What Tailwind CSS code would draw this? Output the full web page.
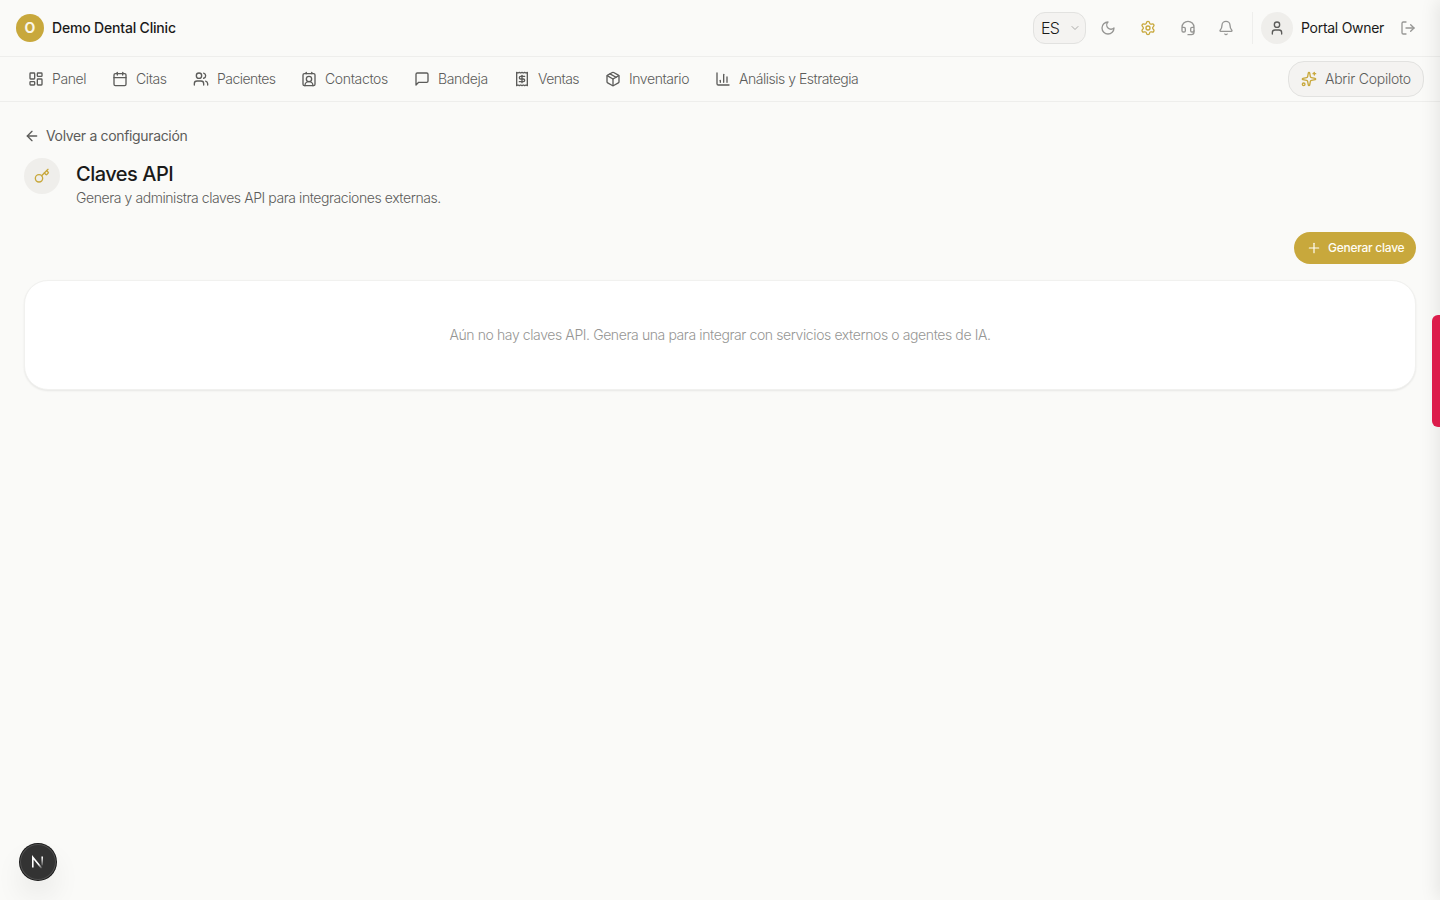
<!DOCTYPE html>
<html lang="es">
  <head>
    <meta charset="UTF-8" />
    <title>Claves API</title>
    <script src="https://cdn.jsdelivr.net/npm/@tailwindcss/browser@4"></script>
  </head>
  <body class="h-screen overflow-hidden bg-[#fafaf8] font-['Inter',sans-serif] text-[#1a1a1a]">
    <!-- Top bar -->
    <header class="flex h-[57px] items-center justify-between border-b border-[#eeeeec] pr-6 pl-4">
      <div class="flex items-center gap-2">
        <div class="flex size-7 items-center justify-center rounded-full bg-[#c8a83c] text-sm font-bold text-[#faf6e8]">O</div>
        <span class="w-32 whitespace-nowrap text-sm font-medium tracking-[-0.18px]">Demo Dental Clinic</span>
      </div>

      <div class="flex items-center">
        <button class="flex h-8 w-[53px] items-center justify-between rounded-xl border border-[#e2e2e0] bg-[#f4f3f1] pr-1 pl-[7px]">
          <span class="text-base font-light tracking-[-0.8px]">ES</span>
          <svg class="size-3 text-[#aaaaa8]" viewBox="0 0 24 24" fill="none" stroke="currentColor" stroke-width="2" stroke-linecap="round" stroke-linejoin="round"><path d="m6 9 6 6 6-6" /></svg>
        </button>
        <svg class="ml-3.5 size-4 text-[#969694]" viewBox="0 0 24 24" fill="none" stroke="currentColor" stroke-width="2" stroke-linecap="round" stroke-linejoin="round"><path d="M12 3a6 6 0 0 0 9 9 9 9 0 1 1-9-9Z" /></svg>
        <svg class="ml-6 size-4 text-[#c8a83c]" viewBox="0 0 24 24" fill="none" stroke="currentColor" stroke-width="2" stroke-linecap="round" stroke-linejoin="round"><path d="M9.671 4.136a2.34 2.34 0 0 1 4.659 0 2.34 2.34 0 0 0 3.319 1.915 2.34 2.34 0 0 1 2.33 4.033 2.34 2.34 0 0 0 0 3.831 2.34 2.34 0 0 1-2.33 4.033 2.34 2.34 0 0 0-3.319 1.915 2.34 2.34 0 0 1-4.659 0 2.34 2.34 0 0 0-3.32-1.915 2.34 2.34 0 0 1-2.33-4.033 2.34 2.34 0 0 0 0-3.831A2.34 2.34 0 0 1 6.35 6.051a2.34 2.34 0 0 0 3.319-1.915" /><circle cx="12" cy="12" r="3" /></svg>
        <svg class="ml-6 size-4 text-[#969694]" viewBox="0 0 24 24" fill="none" stroke="currentColor" stroke-width="2" stroke-linecap="round" stroke-linejoin="round"><path d="M3 11h3a2 2 0 0 1 2 2v3a2 2 0 0 1-2 2H5a2 2 0 0 1-2-2v-5Zm0 0a9 9 0 1 1 18 0m0 0v5a2 2 0 0 1-2 2h-1a2 2 0 0 1-2-2v-3a2 2 0 0 1 2-2h3Z" /><path d="M21 16v2a4 4 0 0 1-4 4h-5" /></svg>
        <svg class="ml-[22px] size-4 text-[#969694]" viewBox="0 0 24 24" fill="none" stroke="currentColor" stroke-width="2" stroke-linecap="round" stroke-linejoin="round"><path d="M10.268 21a2 2 0 0 0 3.464 0" /><path d="M3.262 15.326A1 1 0 0 0 4 17h16a1 1 0 0 0 .74-1.673C19.41 13.956 18 12.499 18 8A6 6 0 0 0 6 8c0 4.499-1.411 5.956-2.738 7.326" /></svg>
        <div class="ml-[18px] h-8 w-px bg-[#eeeeec]"></div>
        <div class="ml-2 flex size-8 items-center justify-center rounded-full bg-[#efeeeb]">
          <svg class="size-4 text-[#5c5c5a]" viewBox="0 0 24 24" fill="none" stroke="currentColor" stroke-width="2" stroke-linecap="round" stroke-linejoin="round"><path d="M19 21v-2a4 4 0 0 0-4-4H9a4 4 0 0 0-4 4v2" /><circle cx="12" cy="7" r="4" /></svg>
        </div>
        <span class="ml-2 w-[84px] whitespace-nowrap text-sm tracking-[-0.28px]">Portal Owner</span>
        <svg class="ml-[15px] size-4 text-[#969694]" viewBox="0 0 24 24" fill="none" stroke="currentColor" stroke-width="2" stroke-linecap="round" stroke-linejoin="round"><path d="M9 21H5a2 2 0 0 1-2-2V5a2 2 0 0 1 2-2h4" /><path d="m16 17 5-5-5-5" /><path d="M21 12H9" /></svg>
      </div>
    </header>

    <!-- Main navigation -->
    <nav class="flex h-[45px] items-center justify-between border-b border-[#eeeeec] px-4 text-sm font-light text-[#5c5c5a]">
      <div class="flex items-center gap-0.5 whitespace-nowrap">
        <a class="flex items-center gap-2 px-3">
          <svg class="size-4" viewBox="0 0 24 24" fill="none" stroke="currentColor" stroke-width="2" stroke-linecap="round" stroke-linejoin="round"><rect width="7" height="9" x="3" y="3" rx="1" /><rect width="7" height="5" x="14" y="3" rx="1" /><rect width="7" height="9" x="14" y="12" rx="1" /><rect width="7" height="5" x="3" y="16" rx="1" /></svg>
          <span class="w-[34px] tracking-[-0.4px]">Panel</span>
        </a>
        <a class="flex items-center gap-2 px-3">
          <svg class="size-4" viewBox="0 0 24 24" fill="none" stroke="currentColor" stroke-width="2" stroke-linecap="round" stroke-linejoin="round"><path d="M8 2v4" /><path d="M16 2v4" /><rect width="18" height="18" x="3" y="4" rx="2" /><path d="M3 10h18" /></svg>
          <span class="w-[31px] tracking-[-0.4px]">Citas</span>
        </a>
        <a class="flex items-center gap-2 px-3">
          <svg class="size-4" viewBox="0 0 24 24" fill="none" stroke="currentColor" stroke-width="2" stroke-linecap="round" stroke-linejoin="round"><path d="M16 21v-2a4 4 0 0 0-4-4H6a4 4 0 0 0-4 4v2" /><circle cx="9" cy="7" r="4" /><path d="M22 21v-2a4 4 0 0 0-3-3.87" /><path d="M16 3.13a4 4 0 0 1 0 7.75" /></svg>
          <span class="w-[58px] tracking-[-0.55px]">Pacientes</span>
        </a>
        <a class="flex items-center gap-2 px-3">
          <svg class="size-4" viewBox="0 0 24 24" fill="none" stroke="currentColor" stroke-width="2" stroke-linecap="round" stroke-linejoin="round"><path d="M16 2v2" /><path d="M17.915 22a6 6 0 0 0-12 0" /><path d="M8 2v2" /><circle cx="12" cy="12" r="4" /><rect width="18" height="18" x="3" y="4" rx="2" /></svg>
          <span class="w-[63px] tracking-[-0.35px]">Contactos</span>
        </a>
        <a class="flex items-center gap-2 px-3">
          <svg class="size-4" viewBox="0 0 24 24" fill="none" stroke="currentColor" stroke-width="2" stroke-linecap="round" stroke-linejoin="round"><path d="M21 15a2 2 0 0 1-2 2H7l-4 4V5a2 2 0 0 1 2-2h14a2 2 0 0 1 2 2z" /></svg>
          <span class="w-[50px] tracking-[-0.4px]">Bandeja</span>
        </a>
        <a class="flex items-center gap-2 px-3">
          <svg class="size-4" viewBox="0 0 24 24" fill="none" stroke="currentColor" stroke-width="2" stroke-linecap="round" stroke-linejoin="round"><path d="M4 2v20l2-1 2 1 2-1 2 1 2-1 2 1 2-1 2 1V2l-2 1-2-1-2 1-2-1-2 1-2-1-2 1Z" /><path d="M16 8h-6a2 2 0 1 0 0 4h4a2 2 0 1 1 0 4H8" /><path d="M12 17.5v-11" /></svg>
          <span class="w-[41px] tracking-[-0.55px]">Ventas</span>
        </a>
        <a class="flex items-center gap-2 px-3">
          <svg class="size-4" viewBox="0 0 24 24" fill="none" stroke="currentColor" stroke-width="2" stroke-linecap="round" stroke-linejoin="round"><path d="M11 21.73a2 2 0 0 0 2 0l7-4A2 2 0 0 0 21 16V8a2 2 0 0 0-1-1.73l-7-4a2 2 0 0 0-2 0l-7 4A2 2 0 0 0 3 8v8a2 2 0 0 0 1 1.73z" /><path d="M12 22V12" /><path d="M3.29 7 12 12l8.71-5" /><path d="m7.5 4.27 9 5.15" /></svg>
          <span class="w-[60px] tracking-[-0.42px]">Inventario</span>
        </a>
        <a class="flex items-center gap-2 px-3">
          <svg class="size-4" viewBox="0 0 24 24" fill="none" stroke="currentColor" stroke-width="2" stroke-linecap="round" stroke-linejoin="round"><path d="M3 3v16a2 2 0 0 0 2 2h16" /><path d="M18 17V9" /><path d="M13 17V5" /><path d="M8 17v-3" /></svg>
          <span class="w-[120px] tracking-[-0.48px]">Análisis y Estrategia</span>
        </a>
      </div>

      <button class="flex h-9 w-[136px] items-center gap-2 rounded-2xl border border-[#e2e2e0] bg-[#f4f3f1] px-3 whitespace-nowrap">
        <svg class="size-4 shrink-0 text-[#c8a83c]" viewBox="0 0 24 24" fill="none" stroke="currentColor" stroke-width="2" stroke-linecap="round" stroke-linejoin="round"><path d="M11.017 2.814a1 1 0 0 1 1.966 0l1.051 5.558a2 2 0 0 0 1.594 1.594l5.558 1.051a1 1 0 0 1 0 1.966l-5.558 1.051a2 2 0 0 0-1.594 1.594l-1.051 5.558a1 1 0 0 1-1.966 0l-1.051-5.558a2 2 0 0 0-1.594-1.594l-5.558-1.051a1 1 0 0 1 0-1.966l5.558-1.051a2 2 0 0 0 1.594-1.594z" /><path d="M20 2v4" /><path d="M22 4h-4" /><circle cx="4" cy="20" r="2" /></svg>
        <span class="tracking-[-0.25px]">Abrir Copiloto</span>
      </button>
    </nav>

    <main class="px-6 pt-6">
      <a class="flex h-5 items-center gap-1.5 text-sm text-[#5c5c5a]">
        <svg class="size-4" viewBox="0 0 24 24" fill="none" stroke="currentColor" stroke-width="2" stroke-linecap="round" stroke-linejoin="round"><path d="m12 19-7-7 7-7" /><path d="M19 12H5" /></svg>
        <span class="tracking-[-0.34px]">Volver a configuración</span>
      </a>

      <div class="mt-3 flex gap-4">
        <div class="flex size-9 items-center justify-center rounded-full bg-[#efeeeb]">
          <svg class="size-4 text-[#c8a83c]" viewBox="0 0 24 24" fill="none" stroke="currentColor" stroke-width="2" stroke-linecap="round" stroke-linejoin="round"><path d="m15.5 7.5 2.3 2.3a1 1 0 0 0 1.4 0l2.1-2.1a1 1 0 0 0 0-1.4L19 4" /><path d="m21 2-9.6 9.6" /><circle cx="7.5" cy="15.5" r="5.5" /></svg>
        </div>
        <div class="pt-0.5">
          <h1 class="text-xl font-medium tracking-[-0.5px]">Claves API</h1>
          <p class="text-sm font-light tracking-[-0.43px] text-[#5c5c5a]">Genera y administra claves API para integraciones externas.</p>
        </div>
      </div>

      <div class="mt-6 flex justify-end">
        <button class="flex h-8 w-[122px] items-center gap-1.5 rounded-full bg-[#c8a83c] pl-3 text-xs font-medium whitespace-nowrap text-[#fffdf5]">
          <svg class="size-4 shrink-0" viewBox="0 0 24 24" fill="none" stroke="currentColor" stroke-width="1.8" stroke-linecap="round" stroke-linejoin="round"><path d="M5 12h14" /><path d="M12 5v14" /></svg>
          <span class="tracking-[-0.27px]">Generar clave</span>
        </button>
      </div>

      <section class="mt-4 flex h-[110px] items-center justify-center rounded-3xl border border-[#f1f1ef] bg-white shadow-[0_1px_2px_rgba(0,0,0,0.08)]">
        <p class="text-sm font-light tracking-[-0.4px] text-[#969694]">Aún no hay claves API. Genera una para integrar con servicios externos o agentes de IA.</p>
      </section>
    </main>

    <!-- Closed side drawer: only its shadow and handle reach the page -->
    <div class="fixed inset-y-0 left-full w-96 shadow-[-4px_0_16px_rgba(0,0,0,0.08)]"></div>
    <div class="fixed top-[315px] right-0 h-28 w-2 rounded-l-md bg-[#dc1c4b]"></div>

    <!-- Dev tools badge -->
    <div class="fixed bottom-5 left-5 flex size-9 items-center justify-center rounded-full bg-[#333333] shadow-[0_0_0_1px_#171717,inset_0_0_0_1px_rgba(255,255,255,0.14),0_16px_32px_-8px_rgba(0,0,0,0.24)]">
      <svg class="size-4" viewBox="0 0 16 16" fill="none" stroke-width="1.6">
        <defs>
          <linearGradient id="stem" x1="0" y1="3" x2="0" y2="13" gradientUnits="userSpaceOnUse">
            <stop stop-color="#fff" />
            <stop offset="1" stop-color="#fff" stop-opacity="0" />
          </linearGradient>
          <linearGradient id="diagonal" x1="9" y1="10" x2="12" y2="14" gradientUnits="userSpaceOnUse">
            <stop stop-color="#fff" />
            <stop offset="1" stop-color="#fff" stop-opacity="0.1" />
          </linearGradient>
        </defs>
        <path d="M2.8 13.4V3.2L11.7 14.2" stroke="url(#diagonal)" />
        <path d="M12.2 2.4v9" stroke="url(#stem)" />
      </svg>
    </div>
  </body>
</html>
